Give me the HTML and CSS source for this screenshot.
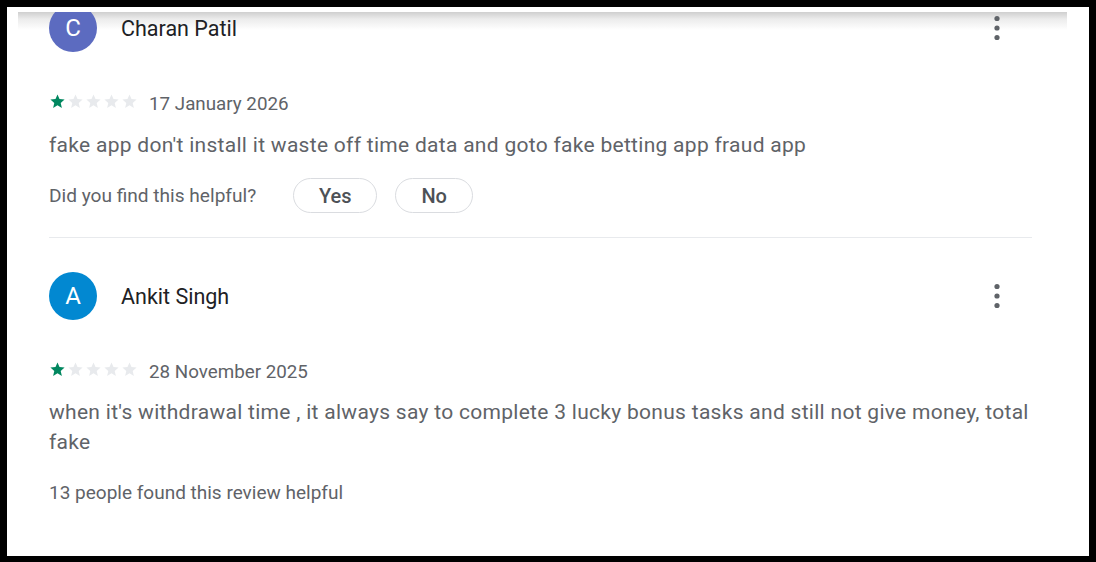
FILE: index.html
```html
<!DOCTYPE html>
<html>
<head>
<meta charset="utf-8">
<link rel="stylesheet" href="styles.css">
</head>
<body>
<div class="frame">
  <div class="viewport">
    <div class="shade"></div>
    <div class="list">
      <div class="review">
        <div class="head">
          <div class="avatar indigo">C</div>
          <div class="name">Charan Patil</div>
          <svg class="more" width="24" height="40" viewBox="0 0 24 40"><circle cx="12" cy="10.5" r="2.6"/><circle cx="12" cy="20" r="2.6"/><circle cx="12" cy="29.5" r="2.6"/></svg>
        </div>
        <div class="meta">
          <div class="stars">
            <svg class="star on" viewBox="0 0 24 24"><path d="M12 17.27L18.18 21l-1.64-7.03L22 9.24l-7.19-.61L12 2 9.19 8.63 2 9.24l5.46 4.730L5.82 21z"/></svg>
            <svg class="star" viewBox="0 0 24 24"><path d="M12 17.27L18.18 21l-1.64-7.03L22 9.24l-7.19-.61L12 2 9.19 8.63 2 9.24l5.46 4.73L5.82 21z"/></svg>
            <svg class="star" viewBox="0 0 24 24"><path d="M12 17.27L18.18 21l-1.64-7.03L22 9.24l-7.19-.61L12 2 9.19 8.63 2 9.24l5.46 4.73L5.82 21z"/></svg>
            <svg class="star" viewBox="0 0 24 24"><path d="M12 17.27L18.18 21l-1.64-7.03L22 9.24l-7.19-.61L12 2 9.19 8.63 2 9.24l5.46 4.73L5.82 21z"/></svg>
            <svg class="star" viewBox="0 0 24 24"><path d="M12 17.27L18.18 21l-1.64-7.03L22 9.24l-7.19-.61L12 2 9.19 8.63 2 9.24l5.46 4.73L5.82 21z"/></svg>
          </div>
          <span class="date">17 January 2026</span>
        </div>
        <p class="text">fake app don't install it waste off time data and goto fake betting app fraud app</p>
        <div class="helpful">
          <span class="ask">Did you find this helpful?</span>
          <button class="pill yes">Yes</button>
          <button class="pill no">No</button>
        </div>
      </div>
      <div class="divider"></div>
      <div class="review second">
        <div class="head">
          <div class="avatar blue">A</div>
          <div class="name">Ankit Singh</div>
          <svg class="more" width="24" height="40" viewBox="0 0 24 40"><circle cx="12" cy="10.5" r="2.6"/><circle cx="12" cy="20" r="2.6"/><circle cx="12" cy="29.5" r="2.6"/></svg>
        </div>
        <div class="meta">
          <div class="stars">
            <svg class="star on" viewBox="0 0 24 24"><path d="M12 17.27L18.18 21l-1.64-7.03L22 9.24l-7.19-.61L12 2 9.19 8.63 2 9.24l5.46 4.73L5.82 21z"/></svg>
            <svg class="star" viewBox="0 0 24 24"><path d="M12 17.27L18.18 21l-1.64-7.03L22 9.24l-7.19-.61L12 2 9.19 8.63 2 9.24l5.46 4.73L5.82 21z"/></svg>
            <svg class="star" viewBox="0 0 24 24"><path d="M12 17.27L18.18 21l-1.64-7.03L22 9.24l-7.19-.61L12 2 9.19 8.63 2 9.24l5.46 4.73L5.82 21z"/></svg>
            <svg class="star" viewBox="0 0 24 24"><path d="M12 17.27L18.18 21l-1.64-7.03L22 9.24l-7.19-.61L12 2 9.19 8.63 2 9.24l5.46 4.73L5.82 21z"/></svg>
            <svg class="star" viewBox="0 0 24 24"><path d="M12 17.27L18.18 21l-1.64-7.03L22 9.24l-7.19-.61L12 2 9.19 8.63 2 9.24l5.46 4.73L5.82 21z"/></svg>
          </div>
          <span class="date">28 November 2025</span>
        </div>
        <p class="text">when it's withdrawal time , it always say to complete 3 lucky bonus tasks and still not give money, total fake</p>
        <div class="count">13 people found this review helpful</div>
      </div>
    </div>
  </div>
</div>
</body>
</html>
```

FILE: styles.css
```css
html, body {
  margin: 0;
  padding: 0;
  background: #000;
}

body {
  font-family: Roboto, "Liberation Sans", Arial, sans-serif;
  width: 1096px;
  height: 562px;
  overflow: hidden;
}

.frame {
  margin: 7px 7px 6px 7px;
  height: 549px;
  background: #fff;
  padding-top: 5px;
  box-sizing: border-box;
}

.viewport {
  margin-left: 11px;
  width: 1049px;
  height: 544px;
  overflow: hidden;
  position: relative;
}

.shade {
  position: absolute;
  top: 0;
  left: 0;
  right: 0;
  height: 18px;
  background: linear-gradient(to bottom, #cfcfcf 0%, #ececec 40%, #ffffff 100%);
  z-index: 0;
}

.list {
  position: relative;
  z-index: 1;
  margin-top: -8px;
  padding-left: 31px;
  width: 983px;
}

.head {
  display: flex;
  align-items: center;
  height: 48px;
}

.avatar {
  width: 48px;
  height: 48px;
  border-radius: 50%;
  color: #fff;
  font-size: 24px;
  display: flex;
  align-items: center;
  justify-content: center;
  flex: none;
}

.indigo { background: #5c6bc0; }
.blue { background: #0288d1; }

.name {
  margin-left: 24px;
  flex: 1;
  font-size: 21.5px;
  color: #202124;
}

.more {
  fill: #5f6368;
  margin-right: 23px;
  flex: none;
}

.meta {
  margin-top: 39px;
  display: flex;
  align-items: center;
  height: 20px;
}

.stars {
  display: flex;
  gap: 1px;
}

.star {
  width: 17px;
  height: 17px;
  fill: #e8eaed;
}

.star.on { fill: #01875f; }

.date {
  margin-left: 11px;
  margin-top: 6px;
  font-size: 18.8px;
  color: #5f6368;
}

.text {
  margin: 19px 0 0 0;
  font-size: 21px;
  line-height: 30px;
  color: #5f6368;
  letter-spacing: 0.29px;
}

.helpful {
  margin-top: 18px;
  display: flex;
  align-items: center;
  height: 35px;
}

.ask {
  font-size: 19.1px;
  color: #5f6368;
  margin-right: 37px;
}

.pill {
  height: 35px;
  border: 1px solid #dadce0;
  border-radius: 18px;
  background: #fff;
  font-family: inherit;
  font-size: 20px;
  font-weight: 500;
  color: #4d5156;
  padding: 0;
  box-sizing: border-box;
}

.yes { width: 84px; }
.no { width: 78px; margin-left: 18px; }

.divider {
  margin-top: 24px;
  height: 1px;
  background: #e8eaed;
}

.second {
  margin-top: 34px;
}

.second .text {
  margin-top: 18px;
}

.count {
  margin-top: 26px;
  font-size: 19px;
  line-height: 20px;
  color: #5f6368;
}
```
